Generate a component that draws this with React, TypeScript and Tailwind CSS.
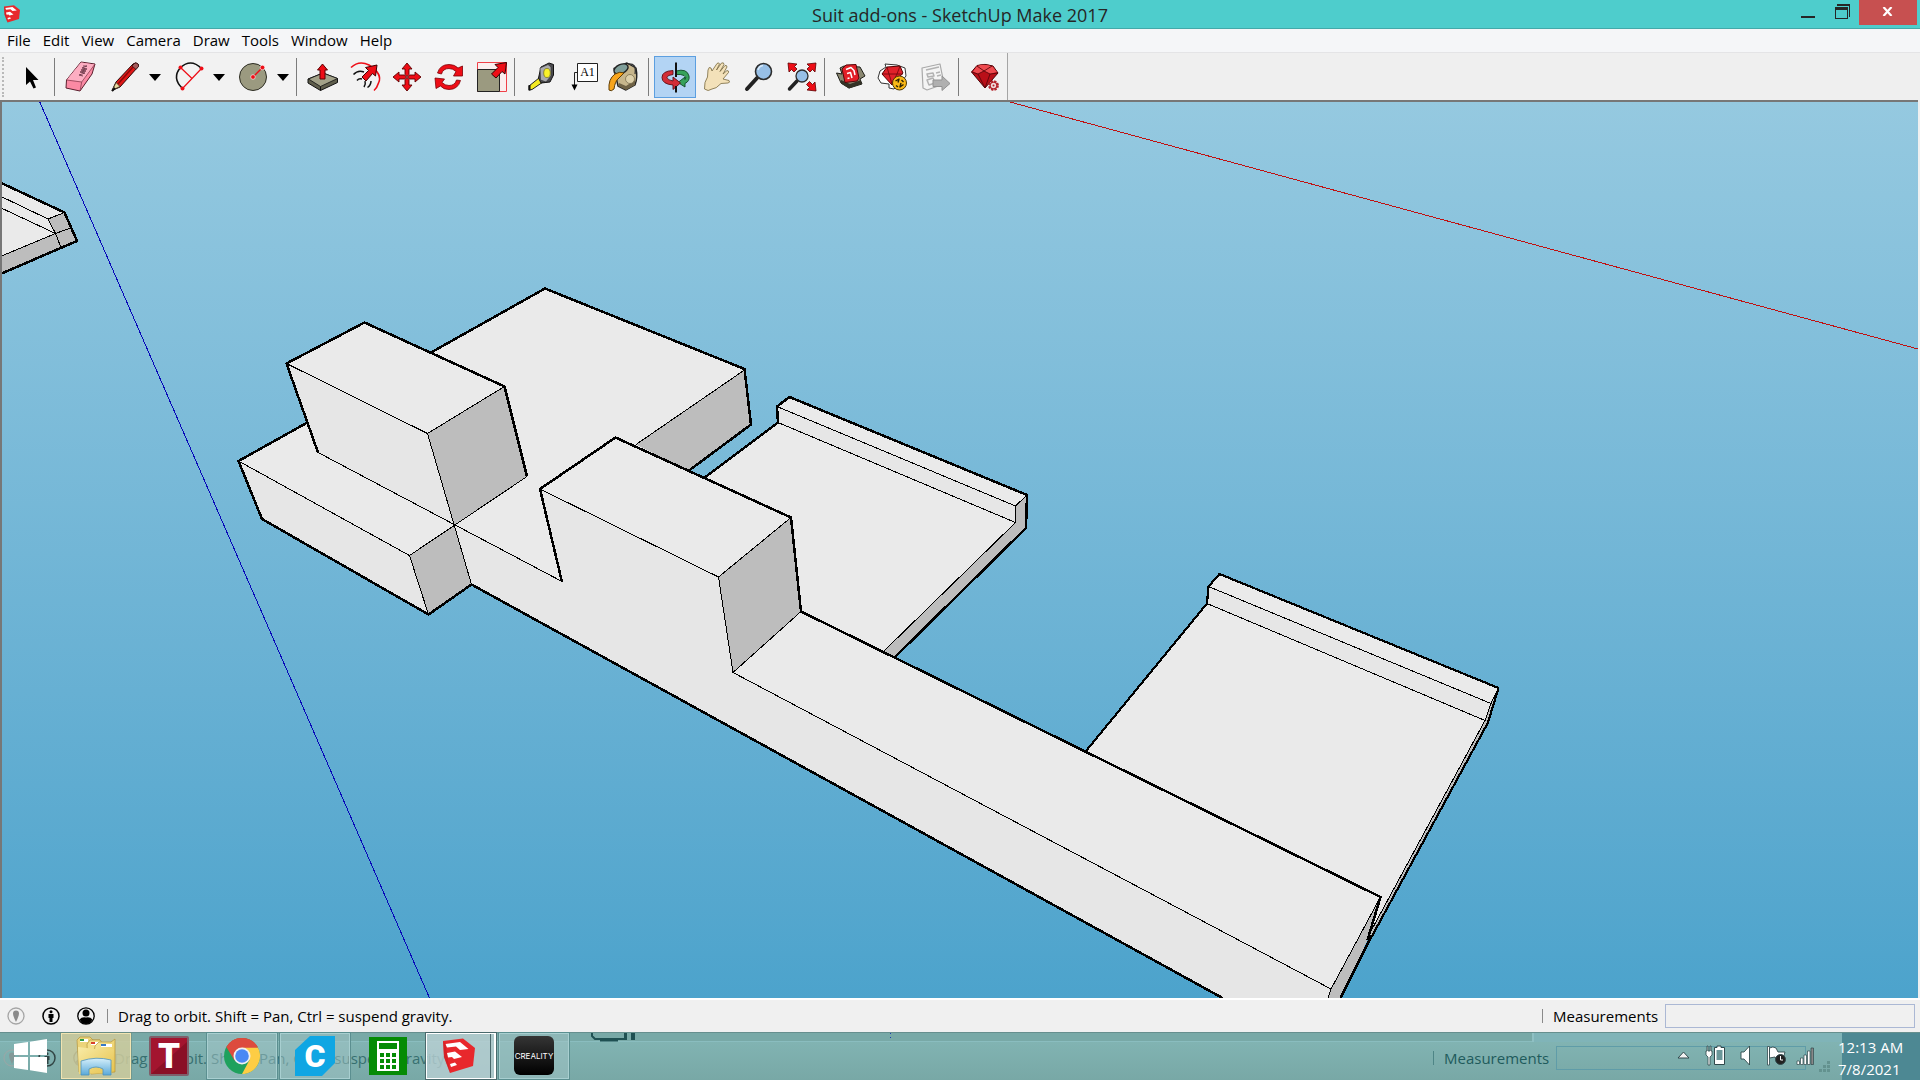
import type { ReactNode } from 'react';

type IconProps = { w?: number; children: ReactNode };

function Glyph({ w = 42, children }: IconProps) {
  return (
    <svg width={w} height={42} viewBox={`0 0 ${w} 42`} fill="none" strokeLinejoin="round" aria-hidden="true">
      {children}
    </svg>
  );
}

function Tool({ label, active, wide, children }: { label: string; active?: boolean; wide?: boolean; children: ReactNode }) {
  return (
    <button
      type="button"
      aria-label={label}
      aria-pressed={active ? true : undefined}
      className={
        'flex h-[42px] shrink-0 items-center justify-center ' +
        (wide ? 'w-[46px] ' : 'w-[42px] ') +
        (active ? 'bg-[#b3d4f4] outline outline-1 -outline-offset-1 outline-[#5c9fe0]' : '')
      }
    >
      <Glyph w={wide ? 46 : 42}>{children}</Glyph>
    </button>
  );
}

function Drop({ label }: { label: string }) {
  return (
    <button type="button" aria-label={label} className="flex h-[42px] w-[18px] shrink-0 items-center justify-start pl-px">
      <svg width="12" height="7" viewBox="0 0 12 7" aria-hidden="true">
        <path d="M0 0H12L6 7Z" fill="#000" />
      </svg>
    </button>
  );
}

function Sep() {
  return (
    <div className="flex w-2 shrink-0 pl-0.5">
      <div className="h-[38px] w-px bg-[#7c7c7c]" />
    </div>
  );
}

const RED = '#ee0d16';

function Toolbar() {
  return (
    <div className="flex h-[47px] w-[1008px] items-center border-r border-[#a5a5a5] bg-[#f2f2f2] pt-px">
      <div className="flex w-[10px] shrink-0 justify-center pr-1">
        <div className="h-10 border-l-2 border-dotted border-[#b9b9b9]" />
      </div>
      <Tool label="Select">
        <path d="M16 11V29L20 25.500L23.500 32.500L26 31.500L23 24H28.500Z" fill="#000" />
      </Tool>
      <Sep />
      <Tool label="Eraser">
        <path d="M21 6L35 8L32 18L20 35L6 32L6.500 24Z" fill="#fb8aa4" stroke="#5a1f2d" />
        <path d="M21 6.500L34.500 8.500L22 26L7 23.500Z" fill="#fdaec2" />
        <path d="M6.500 24L21.700 26L35 8M21.700 26L20 35" stroke="#8c3d50" strokeWidth=".8" />
        <path d="M23 10l4 0-5 2 5 1-6 1 5 1-6 1 5 1-6 2 4 1" stroke="#6a3546" strokeWidth=".9" />
      </Tool>
      <Tool label="Line" wide>
        <path d="M10 34.500L14 26L31 8Q34 5.500 36.500 8.500Q37 10.500 35 12L18 31Z" fill="#e01818" stroke="#2a0808" />
        <path d="M10.500 34L14 26.500L18 30.500Z" fill="#e8d9a0" stroke="#3b3520" strokeWidth=".8" />
        <path d="M30 10L34 13.500L36.500 10.500Q37 7 33 7Z" fill="#a55b5b" stroke="#311" strokeWidth=".8" />
        <path d="M16 28L31 11" stroke="#8b0808" strokeWidth="1.500" />
        <path d="M10 35l3-3" stroke="#111" strokeWidth="2" />
      </Tool>
      <Drop label="Line tools" />
      <Tool label="2 Point Arc" wide>
        <path d="M14.500 11.500Q25 2 35.500 12.500M14.500 11.500Q5.500 22 16.500 32.500" stroke="#111" strokeWidth="1.500" />
        <path d="M14.500 11.500L26 22.500M35.500 12.500L16.500 32.500" stroke={RED} strokeWidth="1.200" />
        <circle cx="14.500" cy="11.500" r="2" fill={RED} />
        <circle cx="35.500" cy="12.500" r="2" fill={RED} />
        <circle cx="16.500" cy="32.500" r="2" fill={RED} />
      </Tool>
      <Drop label="Arc tools" />
      <Tool label="Circle" wide>
        <circle cx="23" cy="21" r="13.500" fill="#9b9a80" stroke="#2c2c22" />
        <path d="M23 21L32.500 11.500" stroke={RED} strokeWidth="1.500" />
        <circle cx="23" cy="21" r="2.300" fill={RED} stroke="#fff" strokeWidth=".6" />
        <circle cx="32.500" cy="11.500" r="2.300" fill={RED} stroke="#fff" strokeWidth=".6" />
      </Tool>
      <Drop label="Shape tools" />
      <Sep />
      <Tool label="Push/Pull">
        <path d="M6 23L21 17L35.500 22.500V26.500L18.500 34.500L6 27Z" fill="#5f5e4c" stroke="#111" />
        <path d="M6.500 23L21 17L35.500 22.500L18.500 30.500Z" fill="#a3a289" stroke="#111" strokeWidth=".8" />
        <path d="M18.500 30.500V34.500" stroke="#111" />
        <path d="M20.500 8L25.500 14H23V23H18V14H15.500Z" fill={RED} stroke="#5c0000" />
      </Tool>
      <Tool label="Offset">
        <path d="M7 11.500Q15 4 25 9Q39 18 34.500 27Q33 32 30 34.500" stroke={RED} strokeWidth="1.600" />
        <path d="M9.500 18.500Q14 13.500 20 16M27 25Q27 29 23.500 31.500M13 24.500Q15 22 18 23M21 25Q22 28 20 31" stroke="#111" strokeWidth="1.500" />
        <path d="M33 9L31.500 20L28.500 17.500L22 25L18 21L24.500 14.500L21.500 11.500Z" fill={RED} stroke="#420000" />
      </Tool>
      <Tool label="Move">
        <path
          d="M21 7L26 13H23V18.500L21 20.500L19 18.500V13H16ZM21 35L16 29H19V23.500L21 21.500L23 23.500V29H26ZM7 21L13 16V19H18.500L20.500 21L18.500 23H13V26ZM35 21L29 26V23H23.500L21.500 21L23.500 19H29V16Z"
          fill={RED}
          stroke="#5c0000"
          strokeWidth=".9"
        />
      </Tool>
      <Tool label="Rotate">
        <path d="M9.500 17Q12 8.500 21 8.500Q27 8.500 30 12L34.500 10V20H25.500L28 15.500Q25 12.500 21 12.500Q15 12.500 13.500 18Z" fill={RED} stroke="#7c0006" strokeWidth=".8" />
        <path d="M32.500 24.500Q30 33.500 21 33.500Q15.500 33.500 12.500 30L8 32.500L7 22L16.500 23L14 26.500Q17 29.500 21 29.500Q27 29.500 28.500 24Z" fill={RED} stroke="#7c0006" strokeWidth=".8" />
      </Tool>
      <Tool label="Scale">
        <rect x="7.500" y="6.500" width="29" height="29" fill="#fbeeee" stroke="#f04048" />
        <rect x="7.500" y="13.500" width="22" height="22" fill="#9b9a80" stroke="#222" />
        <path d="M36.500 6.500L35 18L32 15.500L26 22L21.500 18L28 11.500L25 8.500Z" fill={RED} stroke="#300" />
      </Tool>
      <Sep />
      <Tool label="Tape Measure">
        <path d="M9 30L19 22L23 26L12 33.500L9 34Z" fill="#f4ea20" stroke="#222" />
        <path d="M9.500 29V34.500" stroke="#111" strokeWidth="2" />
        <path d="M21 11L29 7L33.500 8.500V19L30 26L21 27L18.500 22Z" fill="#4b4b50" stroke="#111" />
        <path d="M20 12L28 8.500L31 11V20L26 26L20.500 24Z" fill="#aaaaae" stroke="#333" strokeWidth=".7" />
        <ellipse cx="27" cy="17" rx="3.300" ry="4.500" fill="#fbf22a" stroke="#6f6b12" strokeWidth=".7" />
      </Tool>
      <Tool label="Text">
        <rect x="15.500" y="7.500" width="20" height="18" fill="#fff" stroke="#222" />
        <path d="M15.500 16.500H12.500V30" stroke="#222" />
        <path d="M9.500 28.500H15.500L12.500 34.500Z" fill="#000" />
        <text x="25.500" y="20" textAnchor="middle" fontSize="12" fontFamily="Liberation Serif, serif" fill="#000">A1</text>
      </Tool>
      <Tool label="Paint Bucket">
        <path d="M10 12.500L23 7L32 12Q34 22 31 29L22 34L14 30Z" fill="#c7b68c" stroke="#222" strokeWidth="1.400" />
        <path d="M15 27L22 30L31 24V29L22 34L14 30Z" fill="#6f6245" />
        <ellipse cx="17" cy="13" rx="7.500" ry="4.500" transform="rotate(-25 17 13)" fill="#7f9e99" stroke="#222" strokeWidth="1.400" />
        <path d="M24 8Q33 7 31 18" stroke="#333" strokeWidth="1.400" />
        <circle cx="26" cy="23" r="4.500" fill="#ded1ab" stroke="#6e6345" strokeWidth=".7" />
        <path d="M5 34Q4 23 11 18Q16 15 20 17L15 22Q11 25 10 33Q7 36 5 34Z" fill="#f8a51c" stroke="#5e3e08" />
      </Tool>
      <Sep />
      <Tool label="Orbit" active>
        <path d="M22 15Q33 12 35 20Q36 25 31 27.500V31L24 26.500L31 21V23.500Q33 21 30 19.500Q27 18 22 18.500Z" fill="#37a25b" stroke="#0e4824" strokeWidth=".9" />
        <path d="M19 14.500Q8 15 8 21.500Q8 28 19 29V33.500L26.500 27L19 21V25Q13 24 13 21.500Q13 19 19 18.500Z" fill="#d22c36" stroke="#5d0b12" strokeWidth=".9" />
        <path d="M22 6.500V21M22 30V36.500" stroke="#111" strokeWidth="2" />
      </Tool>
      <Tool label="Pan">
        <path
          d="M8.500 33Q8 26 11.500 21L12 14Q13 10 15 12L16 15L21 7.500Q23 6 23.500 8L20.500 14L25.500 7Q28 6 28 8.500L24 15.500L29 9.500Q31 9 31 11L27 18L31 14.500Q33 14.500 32.500 16.500L27 23L33 24.500Q34.500 26.500 32 27L25 27.500Q20 33 16 33Q12 36 8.500 33Z"
          fill="#f3e1b9"
          stroke="#77683f"
          strokeWidth=".8"
        />
      </Tool>
      <Tool label="Zoom">
        <path d="M19 22L9 33" stroke="#222" strokeWidth="4" strokeLinecap="round" />
        <circle cx="25.500" cy="15.500" r="8" fill="#97bfe6" stroke="#2c2c2c" strokeWidth="1.600" />
        <path d="M20 14Q21 10 25 9.500" stroke="#d9eaf9" strokeWidth="1.500" />
      </Tool>
      <Tool label="Zoom Extents">
        <path d="M17 25L9.500 33" stroke="#222" strokeWidth="3.500" strokeLinecap="round" />
        <circle cx="22" cy="20" r="6" fill="#97bfe6" stroke="#2c2c2c" strokeWidth="1.300" />
        <path
          d="M8 7L17 8L14.500 10.500L17 13L14 16L11.500 13.500L9 16ZM36 7L27 8L29.500 10.500L27 13L30 16L32.500 13.500L35 16ZM36 35L27 34L29.500 31.500L26.500 28.500L29.500 25.500L32.500 28.500L35 26Z"
          fill={RED}
          stroke="#5c0000"
          strokeWidth=".8"
        />
      </Tool>
      <Sep />
      <Tool label="3D Warehouse">
        <path d="M6.500 17L12 18L10 12L14 10L30 11L35 20L30 23L32 28L19 32L11 27Z" fill="#8a8771" stroke="#1d1d17" />
        <path d="M11 24L20 28L31 24V28L19 32.500L11 27.500Z" fill="#343226" />
        <path d="M12 13L16 9L26 8.500L29 22L27 25L15 26.500Z" fill="#e31f27" stroke="#550508" />
        <path d="M16 13.500L21 11.500L24 14.500L25 19M17 17.500L20.500 16.500L22 22M17.500 22.500L19.500 22" stroke="#fff" strokeWidth="1.500" />
      </Tool>
      <Tool label="Extension Warehouse">
        <path d="M8 15L14 11L13 8L25 9L33 12L34 20L30 25L22 33L17 32V28L9 27L6 22Z" fill="#fff" stroke="#333" />
        <path d="M10 18L15 11L28 10L31 17L20 29Z" fill="#e0212a" stroke="#500" />
        <path d="M10 18H31M15 11L17 18L20 28L25 18L28 10" stroke="#6d0509" strokeWidth=".8" />
        <circle cx="27.500" cy="27" r="7" fill="#fbb917" stroke="#4d3805" />
        <path d="M23.500 25L27 23L26 26.500M31.500 28.500L28 31L29 27M24 29.500L26 31M29.500 24L31.500 26" stroke="#2c2205" strokeWidth="1.400" />
      </Tool>
      <Tool label="Send to LayOut">
        <path d="M8 12L26 8L30 28L13 34L9 32Z" fill="#f4f4f4" stroke="#a9a9a9" strokeWidth="1.200" />
        <path d="M12 14L25 11M13 18L19 17L20 20L14 21ZM13 24L19 22L21 27L15 29ZM22 17L26 16M23 20L27 19" stroke="#b2b2b2" strokeWidth="1.500" />
        <path d="M19 24H28V20L36 27.500L28 34.500V30.500H19Z" fill="#b0b0b0" stroke="#929292" />
      </Tool>
      <Sep />
      <Tool label="Extension Manager">
        <path d="M7.500 16L13 9.500Q21 7 29 10L34 17L21 32Z" fill="#b90f18" stroke="#4c0307" />
        <path d="M9 15.500L13 10Q21 7.500 28.500 10.500L33 16L26 18L20 15L14 18Z" fill="#ee4a4f" />
        <path d="M7.500 16L14 18L20 15L26 18L34 17M14 18L21 32L26 18M13 10L20 15L28 10" stroke="#5c060a" strokeWidth=".9" />
        <circle cx="29.500" cy="29.500" r="4.300" fill="#efd9d9" stroke="#b3262d" strokeWidth="2.200" strokeDasharray="2.200 1.200" />
        <circle cx="29.500" cy="29.500" r="3.300" stroke="#b3262d" strokeWidth="1.200" />
        <circle cx="29.500" cy="29.500" r="1" fill="#b3262d" />
      </Tool>
    </div>
  );
}

const TOP = '#eaeaea';
const SIDE = '#e6e6e6';
const DARK = '#bdbdbd';
const BOLD = 2.5;

function Scene() {
  return (
    <svg
      className="absolute inset-0 h-full w-full"
      viewBox="2 102 1916 896"
      preserveAspectRatio="xMinYMin slice"
      shapeRendering="crispEdges"
      strokeLinejoin="round"
      role="img"
      aria-label="Model view"
    >
      <path d="M39.800 102L429.500 998" stroke="#0808b8" fill="none" />
      <path d="M1010 102L1918 349" stroke="#c01010" fill="none" />

      {/* clipped part at the left edge */}
      <path d="M-2 181.500L64.500 212.500L77 241L-2 275Z" fill={TOP} />
      <path d="M48 219L64.500 212.500L77 241L-2 275V257.500L55.500 233.500Z" fill={DARK} />
      <path d="M-2 195L48 219L64.500 212.500M-2 206.500L55.500 233.500L70.500 228M48 219L55.500 233.500L61 247.500M55.500 233.500L-2 257.500" stroke="#000" fill="none" />
      <path d="M-2 181.500L64.500 212.500L77 241L-2 275" stroke="#000" strokeWidth={BOLD} fill="none" />

      {/* middle slab */}
      <path d="M777 406.500L789.500 397L1027 495L1026 528L894 658L780 640L704 478L778 422.500Z" fill={TOP} />
      <path d="M777 406.500L1015.500 506V522.500L778 422.500Z" fill={SIDE} />
      <path d="M1027 495L1026 528L894 659L884 651L1015.500 522.500V506Z" fill={DARK} />
      <path d="M777 406.500L1015.500 506L1027 495M778 422.500L1015.500 522.500V506M1015.500 522.500L884 651" stroke="#000" fill="none" />
      <path d="M704 478L778 422.500L777 406.500L789.500 397L1027 495L1026 528L894 658" stroke="#000" strokeWidth={BOLD} fill="none" />

      {/* right slab */}
      <path d="M1219.500 574L1208.500 586.500L1207 603.500L1086 751L1367 940L1488 722.500L1498.500 688Z" fill={TOP} />
      <path d="M1208.500 586.500L1491 703.500L1485 720.500L1207 603.500Z" fill={SIDE} />
      <path d="M1498.500 688L1488 722.500L1370 940L1367 938L1485 720.500L1491 703.500Z" fill={DARK} />
      <path d="M1208.500 586.500L1491 703.500L1498 689M1207 603.500L1485 720.500L1491 703.500M1485 720.500L1371 931" stroke="#000" fill="none" />
      <path d="M1086 751L1207 603.500L1208.500 586.500L1219.500 574L1498.500 688L1488 722.500L1371.500 937L1340.500 998" stroke="#000" strokeWidth="2.200" fill="none" />

      {/* long body */}
      <path d="M431 352.500L545 288.500L744.500 369L751 424.500L689 470.500L600 560L454 525.500Z" fill={TOP} />
      <path d="M744.500 370L751 424.500L689 470.500L636 444.500Z" fill={DARK} />
      <path d="M744.500 370L636 444.500" stroke="#000" fill="none" />
      <path d="M431 352.500L545 288.500L744.500 369L751 424.500L689 470.500" stroke="#000" strokeWidth={BOLD} fill="none" />
      <path d="M454.500 525.500L471.500 584.500L1222.500 998H1329L1331 988.500L733 672L719 577L540 489L562 581.500Z" fill={SIDE} />
      <path d="M454.500 525.500L562 581.500L540 489L560 470L480 470Z" fill={TOP} />
      <path d="M801 611.500L1380.500 897L1331 989L733 672.500Z" fill={TOP} />
      <path d="M1380.500 897L1367.500 940L1340.500 998H1328L1331 989Z" fill={DARK} />
      <path d="M540 489L615.500 437.500L791 517.500L718.500 577Z" fill={TOP} />
      <path d="M791 517.500L801 611.500L733 672.500L718.500 577Z" fill={DARK} />
      <path d="M540 489L718.500 577L791 517.500M718.500 577L733 672.500L801 611.500M733 672.500L1331 989L1380.500 897M1331 989L1328 998" stroke="#000" fill="none" />
      <path d="M562 582L540 489L615.500 437.500L791 517.500L801 611.500L1380.500 897L1367.500 940M1371.500 936L1340.500 998M471.500 584.500L1222.500 998" stroke="#000" strokeWidth={BOLD} fill="none" />

      {/* left blocks */}
      <path d="M238.500 461L306.500 423L454.500 525.500L409.500 555.500Z" fill={TOP} />
      <path d="M238.500 461L409.500 555.500L428.500 614.500L262 519Z" fill={SIDE} />
      <path d="M409.500 555.500L454.500 525.500L471.500 584.500L428.500 614.500Z" fill={DARK} />
      <path d="M286.500 363.500L364.500 322.500L504.500 386.500L427.500 433.500Z" fill={TOP} />
      <path d="M286.500 363.500L427.500 433.500L454.500 525.500L318 452.500Z" fill={SIDE} />
      <path d="M504.500 386.500L527 476.500L454.500 525.500L427.500 433.500Z" fill={DARK} />
      <path d="M286.500 363.500L427.500 433.500L504.500 386.500M427.500 433.500L471.500 584.500M318 452.500L562 581.500M238.500 461L409.500 555.500L527 476.500M409.500 555.500L428.500 614.500" stroke="#000" fill="none" />
      <path d="M318 452.500L286.500 363.500L364.500 322.500L504.500 386.500L527 476.500M306.500 423L238.500 461L262 519L428.500 614.500L471.500 584.500" stroke="#000" strokeWidth={BOLD} fill="none" />
    </svg>
  );
}

function StatusIcons() {
  return (
    <div className="flex items-center gap-[17px]">
      <svg width="18" height="18" viewBox="0 0 18 18" aria-hidden="true">
        <circle cx="9" cy="9" r="8" fill="none" stroke="#a5a5a5" strokeWidth="1.300" />
        <path d="M9 3.500A3 3 0 0 1 12 6.500Q12 9 9 15Q6 9 6 6.500A3 3 0 0 1 9 3.500Z" fill="#8a8a8a" />
      </svg>
      <svg width="18" height="18" viewBox="0 0 18 18" aria-hidden="true">
        <circle cx="9" cy="9" r="8" fill="none" stroke="#000" strokeWidth="1.500" />
        <circle cx="9" cy="4.800" r="1.500" fill="#000" />
        <path d="M6.500 7H11.500V11H10.500V15H7.500V11H6.500Z" fill="#000" />
      </svg>
      <svg width="18" height="18" viewBox="0 0 18 18" aria-hidden="true">
        <circle cx="9" cy="9" r="8.200" fill="none" stroke="#000" strokeWidth="1.300" />
        <circle cx="9" cy="6" r="3.500" fill="#000" />
        <path d="M2.500 12.500Q5 9.500 9 10.500Q13 9.500 15.500 12.500Q13 17 9 17Q5 17 2.500 12.500Z" fill="#000" />
      </svg>
    </div>
  );
}

function StatusBar() {
  return (
    <footer className="flex h-[34px] shrink-0 items-center border-t-2 border-white bg-[#f0f0f0] pr-[5px] pl-[7px] text-[15px]">
      <StatusIcons />
      <div className="ml-3 h-[14px] w-px bg-[#8a8a8a]" />
      <p className="ml-[10px] whitespace-nowrap">Drag to orbit. Shift = Pan, Ctrl = suspend gravity.</p>
      <div className="ml-auto h-[14px] w-px bg-[#8a8a8a]" />
      <label htmlFor="measure" className="w-[122px] pl-[10px]">Measurements</label>
      <input id="measure" className="h-6 w-[250px] border border-[#abb8d4] bg-transparent px-1 outline-none" />
    </footer>
  );
}

/* The status bar of the window seen through the glass of the taskbar. */
function GlassReflection() {
  return (
    <div aria-hidden="true" className="absolute inset-0 overflow-hidden text-[15px] text-[#1f5b5c]">
      <div className="absolute inset-x-0 top-0 h-[9px] border-b border-[#8abdbf] bg-[#78a9a7]" />
      <div className="absolute top-0 right-0 h-[9px] w-[388px] border-l-2 border-[#8fc0c3] bg-[#80b4b8]" />
      <svg className="absolute top-0 left-[590px]" width="50" height="9" viewBox="0 0 50 9">
        <path d="M2 0V3L5 6H36V0M10 7.500H28" fill="none" stroke="#1f5052" strokeWidth="2" />
        <path d="M34 0h3v7h-3zM41 0h4v7h-4z" fill="#1f5052" />
      </svg>
      <svg className="absolute top-0 left-[890px]" width="1" height="5" viewBox="0 0 1 5">
        <path d="M0 0h1v1h-1zM0 4h1v1h-1z" fill="#1c3fae" />
      </svg>
      <div className="absolute inset-x-0 top-3 flex h-[26px] items-center pl-[3px]">
        <div className="opacity-60">
          <StatusIcons />
        </div>
        <p className="ml-[23px] whitespace-nowrap opacity-75">Drag to orbit. Shift = Pan, Ctrl = suspend gravity.</p>
        <div className="ml-auto h-[14px] w-px bg-[#4e8586]" />
        <span className="w-[122px] pl-[10px]">Measurements</span>
        <span className="mr-[114px] h-6 w-[250px] border border-[#5f9ca8]" />
      </div>
      <div className="absolute right-0 bottom-0 h-[47px] w-[78px] bg-[#4d8893]" />
      <svg className="absolute right-[89px] bottom-[7px]" width="12" height="12" viewBox="0 0 12 12">
        <path d="M8 0h3v3h-3zM4 4h3v3h-3zM8 4h3v3h-3zM0 8h3v3h-3zM4 8h3v3h-3zM8 8h3v3h-3z" fill="#63928f" />
      </svg>
    </div>
  );
}

function TaskButton({ label, tone, children }: { label: string; tone?: 'open' | 'gold' | 'active'; children: ReactNode }) {
  const skin =
    tone === 'gold'
      ? 'border border-[#f1e4b2] bg-[#cfcb9c]/85 outline outline-1 outline-[#6b8c7e]/60'
      : tone === 'active'
        ? 'border-y border-l border-r-2 border-white bg-[#b9d0d3]/80 outline outline-1 outline-[#49696c]'
        : tone === 'open'
          ? 'border border-[#a8cfd0] bg-[#a3c6c8]/50 outline outline-1 outline-[#5b8f90]'
          : '';
  return (
    <button type="button" aria-label={label} className={'relative flex h-[46px] w-[70px] shrink-0 items-center justify-center ' + skin}>
      {children}
    </button>
  );
}

function Taskbar() {
  return (
    <nav aria-label="Taskbar" className="relative flex h-12 shrink-0 items-start border-t border-[#668f8e] bg-gradient-to-b from-[#83b6b5] to-[#78a8a6]">
      <GlassReflection />
      <button type="button" aria-label="Start" className="relative flex h-[46px] w-[61px] shrink-0 items-center justify-center">
        <svg width="34" height="34" viewBox="0 0 34 34" fill="#fff" aria-hidden="true">
          <path d="M0 5L14 3V16H0ZM16 2.700L33 0V16H16ZM0 18H14V31L0 29ZM16 18H33V34L16 31.300Z" />
        </svg>
      </button>
      <div className="relative flex gap-[3px]">
        <TaskButton label="File Explorer" tone="gold">
          <svg width="42" height="40" viewBox="0 0 42 40" aria-hidden="true">
            <defs>
              <linearGradient id="folder" x1="0" y1="0" x2="1" y2="1">
                <stop offset="0" stopColor="#f8eba6" />
                <stop offset="1" stopColor="#e6c24c" />
              </linearGradient>
              <linearGradient id="stand" x1="0" y1="0" x2="0" y2="1">
                <stop offset="0" stopColor="#d5effa" />
                <stop offset="1" stopColor="#5aa9d9" />
              </linearGradient>
            </defs>
            <path d="M2 4L5 1H15L18 4H25V34L4 36Z" fill="#ecd47a" stroke="#b4933b" strokeWidth=".7" />
            <path d="M5 3h8v3h-8z" fill="#fff" /><path d="M5 3h4v2h-4z" fill="#2e9c45" />
            <path d="M12 8L15 4H25L28 8H34V35L13 37Z" fill="#f3df89" stroke="#b4933b" strokeWidth=".7" />
            <path d="M16 6h9v3h-9z" fill="#fff" /><path d="M16 6h4v2h-4z" fill="#d8402b" />
            <path d="M20 10L24 6H36L40 3V36L16 38Z" fill="url(#folder)" stroke="#b4933b" strokeWidth=".7" />
            <path d="M26 8h11v3h-11z" fill="#fff" /><path d="M26 8h5v2h-5z" fill="#3679c7" />
            <path d="M3 11L20 13H39L37 37L4 38Z" fill="url(#folder)" />
            <path d="M6 25Q21 20 36 24V39H28V33Q21 29 14 33V39H6Z" fill="url(#stand)" stroke="#4c93bf" strokeWidth=".8" />
          </svg>
        </TaskButton>
        <TaskButton label="T application">
          <svg width="40" height="40" viewBox="0 0 40 40" aria-hidden="true">
            <rect x="1" y="1" width="38" height="38" rx="1" fill="#a3152f" stroke="#7e5f6a" strokeWidth="2" />
            <path d="M2 38L38 38V6Z" fill="#8a1026" />
            <text x="20" y="32" textAnchor="middle" fontSize="35" fontWeight="900" fontFamily="Roboto, sans-serif" fill="#fff">T</text>
          </svg>
        </TaskButton>
        <TaskButton label="Google Chrome" tone="open">
          <svg width="38" height="38" viewBox="0 0 38 38" aria-hidden="true">
            <circle cx="19" cy="19" r="18" fill="#1fa15d" />
            <path d="M19 19L3.400 10A18 18 0 0 1 34.600 10Z" fill="#dd4b3e" />
            <path d="M19 10.500H34.900A18 18 0 0 1 19 37L26.500 23Z" fill="#fdcd45" />
            <path d="M3.400 10L11.500 23.500L19 19V10.500H34.900A18 18 0 0 0 3.400 10Z" fill="#dd4b3e" />
            <circle cx="19" cy="19" r="8.500" fill="#f1f1f1" />
            <circle cx="19" cy="19" r="6.800" fill="#4a88f4" />
          </svg>
        </TaskButton>
        <TaskButton label="Ultimaker Cura" tone="open">
          <svg width="40" height="40" viewBox="0 0 40 40" aria-hidden="true">
            <path d="M15 0H40V27L27 40H0V14Z" fill="#0fa6e3" />
            <text x="20" y="31" textAnchor="middle" fontSize="32" fontWeight="900" fontFamily="Roboto, sans-serif" fill="#fff">C</text>
          </svg>
        </TaskButton>
        <TaskButton label="Calculator">
          <svg width="38" height="38" viewBox="0 0 38 38" aria-hidden="true">
            <rect width="38" height="38" fill="#058b05" />
            <rect x="8" y="4" width="22" height="30" fill="#fff" />
            <path d="M10 6h18v6h-18zM11 16h4v4h-4zM17 16h4v4h-4zM23 16h4v4h-4zM11 22h4v4h-4zM17 22h4v4h-4zM23 22h4v4h-4zM11 28h4v4h-4zM17 28h4v4h-4zM23 28h4v4h-4z" fill="#058b05" />
          </svg>
        </TaskButton>
        <TaskButton label="SketchUp" tone="active">
          <div className="absolute inset-y-0 right-[3px] border-r border-[#49696c]" />
          <div className="mr-1">
            <SketchUpLogo size={36} />
          </div>
        </TaskButton>
        <TaskButton label="Creality" tone="open">
          <svg width="40" height="40" viewBox="0 0 40 40" aria-hidden="true">
            <defs>
              <linearGradient id="black" x1="0" y1="0" x2="0" y2="1">
                <stop offset="0" stopColor="#353535" />
                <stop offset="1" stopColor="#000" />
              </linearGradient>
            </defs>
            <rect width="40" height="39" rx="6" fill="url(#black)" />
            <text x="20" y="22.500" textAnchor="middle" fontSize="8" fontFamily="Inter, sans-serif" fill="#fff">CREALITY</text>
          </svg>
        </TaskButton>
      </div>
      <div className="relative ml-auto flex items-center">
        <svg width="140" height="24" viewBox="0 0 140 24" stroke="#30494c" aria-label="Notification area" role="img">
          <path d="M1 13L6.500 7L12 13Z" fill="#f2f2f2" />
          <path d="M30 1V6H29V10L31 12V20H33V12L35 10V6H34V1H33V6H31V1Z" fill="#fff" strokeWidth=".8" />
          <path d="M37.500 2.500H40V1H44V2.500H47.500V19.500H37.500Z" fill="#fff" />
          <path d="M39.500 5H45.500V15H39.500Z" fill="#6a9799" stroke="none" />
          <path d="M64 7H67L72.500 1V20L67 14H64Z" fill="#fff" strokeWidth=".9" />
          <path d="M90.500 1.500H92.500V20H90.500Z" fill="#fff" strokeWidth=".8" />
          <path d="M92.500 3Q96 1 99 3L101 7H108L106 14H99L98 12L92.500 13Z" fill="#fff" strokeWidth=".9" />
          <circle cx="103.500" cy="14.500" r="5" fill="#222" />
          <path d="M103.500 11V15H106" fill="none" stroke="#fff" />
          <path d="M120 16H122.500V19.500H120ZM123.500 13H126V19.500H123.500ZM127 10H129.500V19.500H127ZM130.500 6H133V19.500H130.500Z" fill="#fff" strokeWidth=".7" />
          <path d="M134 3H136.500V19.500H134Z" fill="#888" strokeWidth=".7" />
        </svg>
        <div className="ml-[17px] w-[86px] pt-[3px] pl-1 text-[15px] leading-[22px] whitespace-nowrap text-white">
          <div>12:13 AM</div>
          <div>7/8/2021</div>
        </div>
      </div>
    </nav>
  );
}

function SketchUpLogo({ size }: { size: number }) {
  return (
    <svg width={size} height={size} viewBox="0 0 36 36" aria-hidden="true">
      <path d="M2 3L22 0.500L34 10L32 28L9 35L3 19Z" fill="#e8282c" />
      <path d="M4.500 6L19 4L27.500 11L19 12L15 8.500L6 9.500ZM6 15L14 13.500L21 19L13 21L11 19L7 19.500ZM9 26L14 24.500L16 27L10 29Z" fill="#fff" />
      <path d="M2 3L4.500 6L9 35L3 19Z" fill="#c4191d" opacity=".5" />
    </svg>
  );
}

const MENUS = ['File', 'Edit', 'View', 'Camera', 'Draw', 'Tools', 'Window', 'Help'];

export default function App() {
  return (
    <div className="flex h-screen flex-col overflow-hidden bg-[#f0f0f0] font-['Open_Sans','Noto_Sans',sans-serif] text-black">
      <header className="relative flex h-[29px] shrink-0 items-start border-b border-[#43a9a9] bg-[#4ecdcc]">
        <div className="pt-[5px] pl-[3px]">
          <SketchUpLogo size={18} />
        </div>
        <h1 className="pointer-events-none absolute inset-x-0 top-0 text-center text-lg leading-[31px] text-[#262626]">
          Suit add-ons - SketchUp Make 2017
        </h1>
        <div className="relative ml-auto flex pr-[3px]">
          <button type="button" aria-label="Minimize" className="flex h-[25px] w-[34px] items-start justify-center pt-4">
            <span className="h-0.5 w-[14px] bg-[#262626]" />
          </button>
          <button type="button" aria-label="Restore" className="flex h-[25px] w-[34px] justify-center pt-1">
            <svg width="15" height="15" viewBox="0 0 15 15" shapeRendering="crispEdges" aria-hidden="true">
              <path d="M2 0H15V13H14V2H2Z" fill="#262626" />
              <path d="M0 3H13V15H0ZM1 6V14H12V6Z" fill="#262626" fillRule="evenodd" />
            </svg>
          </button>
          <button type="button" aria-label="Close" className="flex h-[25px] w-[58px] items-center justify-center bg-[#c75050] pr-0.5 pb-0.5">
            <svg width="11" height="9" viewBox="0 0 11 9" aria-hidden="true">
              <path d="M1.500 0L9.500 9M9.500 0L1.500 9" stroke="#fff" strokeWidth="2.200" />
            </svg>
          </button>
        </div>
      </header>
      <nav aria-label="Menu" className="flex h-6 shrink-0 items-center gap-3 border-b border-[#e4e4e6] bg-[#f5f6f8] pl-[7px] text-[15px]">
        {MENUS.map((m) => (
          <button type="button" key={m}>{m}</button>
        ))}
      </nav>
      <div className="h-[47px] shrink-0 bg-[#efefef]">
        <Toolbar />
      </div>
      <main className="relative mr-0.5 min-h-0 flex-1 border-t-2 border-l-2 border-[#777]">
        <div className="relative h-full bg-gradient-to-b from-[#95c9e0] to-[#4ca3cc]">
          <Scene />
        </div>
      </main>
      <StatusBar />
      <Taskbar />
    </div>
  );
}
